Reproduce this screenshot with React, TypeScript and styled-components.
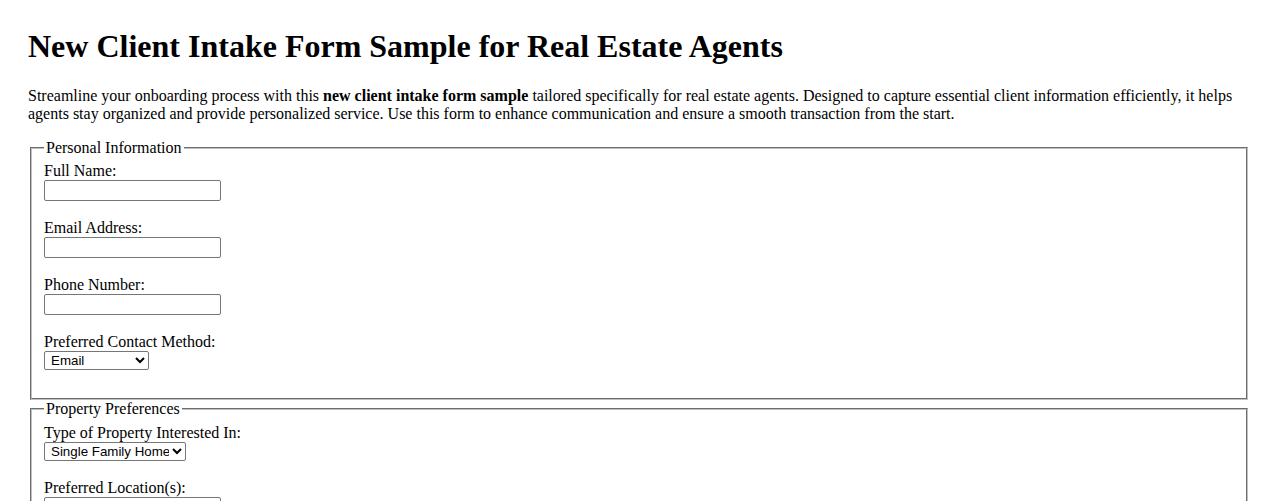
import React from "react";
import styled, { createGlobalStyle } from "styled-components";

const GlobalStyle = createGlobalStyle`
  body {
    margin: 0;
    background: #ffffff;
    color: #000000;
    font-family: "Liberation Serif", "Times New Roman", serif;
    font-size: 16px;
  }
`;

const Page = styled.div`
  padding: 28px;
`;

const Title = styled.h1`
  margin: 0 0 22px;
  font-size: 32px;
  font-weight: bold;
  line-height: 37px;
`;

const Intro = styled.p`
  margin: 0 0 16px;
  line-height: 18px;
`;

const Section = styled.fieldset`
  margin: 0 2px;
  padding: 0 12px 10px;
  border: 2px groove rgb(192, 192, 192);
`;

const Legend = styled.legend`
  padding: 0 2px;
  line-height: 18px;
`;

const Field = styled.div<{ $top: number }>`
  margin-top: ${(p) => p.$top}px;
  margin-bottom: 18px;
`;

const Label = styled.label`
  display: block;
  line-height: 18px;
`;

const TextInput = styled.input`
  display: block;
  box-sizing: border-box;
  width: 177px;
  height: 21px;
  margin: 0;
  padding: 1px 2px;
  border: 1px solid #767676;
  border-radius: 2px;
  font-family: "Liberation Sans", Arial, sans-serif;
  font-size: 13.33px;
`;

const Select = styled.select<{ $width: number }>`
  display: block;
  box-sizing: border-box;
  width: ${(p) => p.$width}px;
  height: 19px;
  margin: 0;
  padding: 0 0 0 2px;
  border: 1px solid #767676;
  border-radius: 2px;
  background: #ffffff;
  color: #000000;
  font-family: "Liberation Sans", Arial, sans-serif;
  font-size: 13.33px;
`;

type FieldProps = { id: string; label: string; top?: number; children: React.ReactNode };

const FormField = ({ id, label, top = 0, children }: FieldProps) => (
  <Field $top={top}>
    <Label htmlFor={id}>{label}</Label>
    {children}
  </Field>
);

export default function App() {
  return (
    <Page>
      <GlobalStyle />
      <Title>New Client Intake Form Sample for Real Estate Agents</Title>
      <Intro>
        Streamline your onboarding process with this <strong>new client intake form sample</strong>{" "}
        tailored specifically for real estate agents. Designed to capture essential client information
        efficiently, it helps agents stay organized and provide personalized service. Use this form to
        enhance communication and ensure a smooth transaction from the start.
      </Intro>
      <form>
        <Section>
          <Legend>Personal Information</Legend>
          <FormField id="fullName" label="Full Name:" top={5}>
            <TextInput id="fullName" type="text" />
          </FormField>
          <FormField id="email" label="Email Address:">
            <TextInput id="email" type="email" />
          </FormField>
          <FormField id="phone" label="Phone Number:">
            <TextInput id="phone" type="tel" />
          </FormField>
          <FormField id="contact" label="Preferred Contact Method:">
            <Select id="contact" $width={105} defaultValue="email">
              <option value="email">Email</option>
              <option value="phone">Phone</option>
              <option value="text">Text Message</option>
            </Select>
          </FormField>
        </Section>
        <Section>
          <Legend>Property Preferences</Legend>
          <FormField id="propertyType" label="Type of Property Interested In:" top={6}>
            <Select id="propertyType" $width={142} defaultValue="single">
              <option value="single">Single Family Home</option>
              <option value="condo">Condo</option>
              <option value="townhouse">Townhouse</option>
              <option value="multi">Multi-Family</option>
            </Select>
          </FormField>
          <FormField id="location" label="Preferred Location(s):">
            <TextInput id="location" type="text" />
          </FormField>
        </Section>
      </form>
    </Page>
  );
}
